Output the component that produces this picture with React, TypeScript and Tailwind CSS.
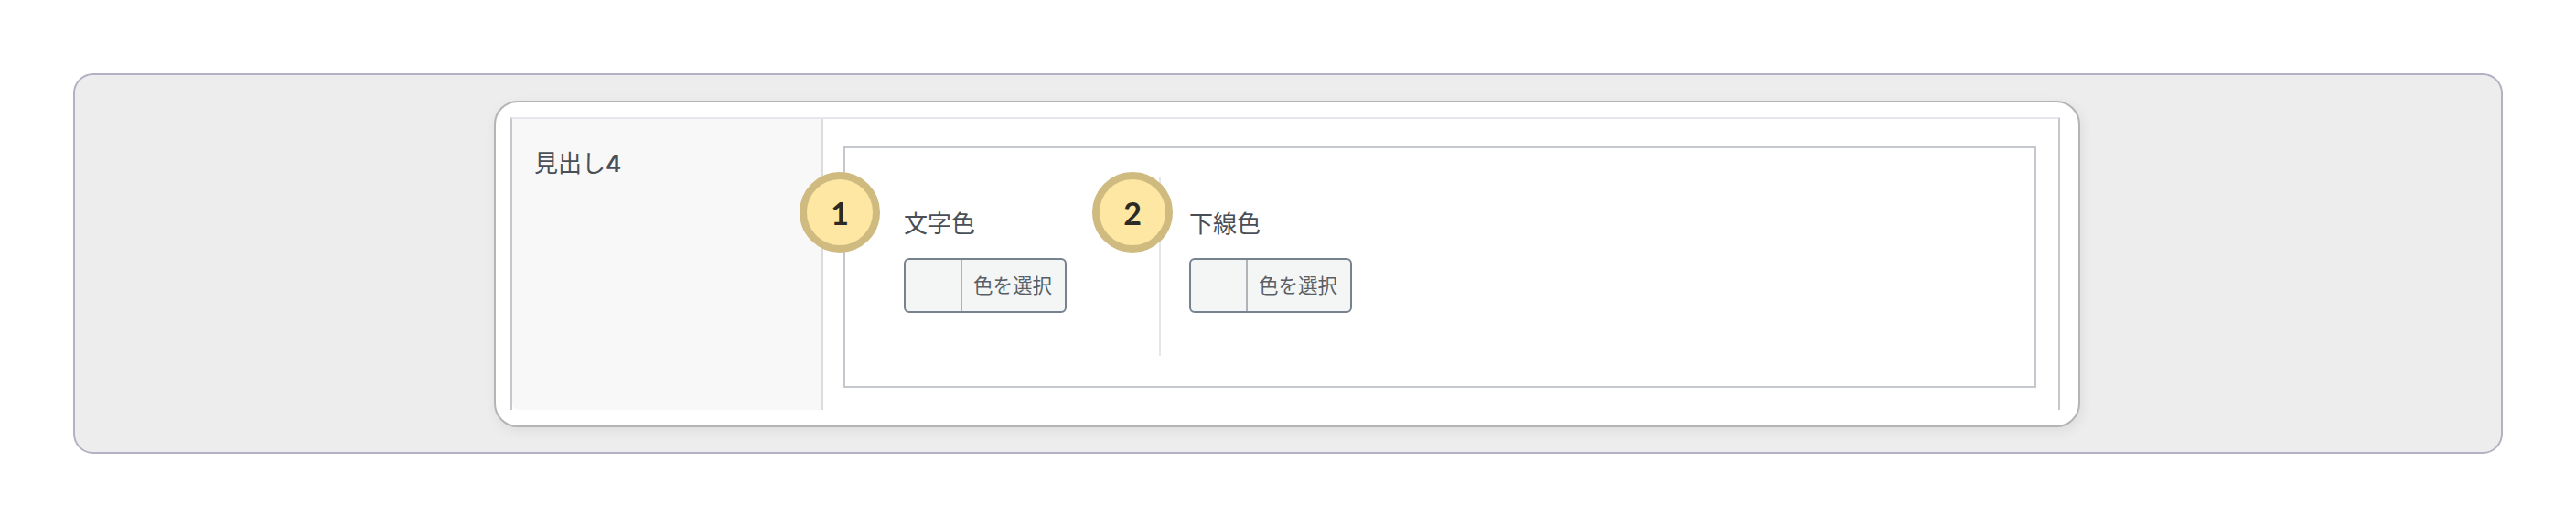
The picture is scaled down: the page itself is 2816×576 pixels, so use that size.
const jp = "font-['Lato','Noto_Sans_CJK_JP',sans-serif]";

function Badge({ n, className }: { n: number; className: string }) {
  return (
    <div
      className={`absolute flex h-[88px] w-[88px] items-center justify-center rounded-full border-[8px] border-[#cfba80] bg-[#fee7a3] text-[34px] font-bold text-[#2c2a25] ${className}`}
    >
      {n}
    </div>
  );
}

function ColorField({ label }: { label: string }) {
  return (
    <div>
      <div className="h-[36px] text-[26px] leading-[36px] text-[#4a4f57]">{label}</div>
      <div className="mt-[20px] flex h-[60px] w-[178px] overflow-hidden rounded-[6px] border-2 border-[#76828e] bg-[#f4f6f6]">
        <div className="w-[62px] border-r-2 border-[#b0b4b8]" />
        <div className="flex-1 pl-[12px] text-[21.5px] leading-[56px] text-[#5a5f66]">色を選択</div>
      </div>
    </div>
  );
}

export default function App() {
  return (
    <div className={`min-h-[576px] bg-white p-[80px] ${jp}`}>
      <div className="flex h-[416px] rounded-[22px] border-2 border-[#b4b1c4] bg-[#ededed] pl-[458px] pt-[28px]">
        <div className="h-[357px] w-[1734px] rounded-[26px] border-2 border-[#b4b4b4] bg-white pl-[16px] pr-[20px] pt-[16px] shadow-[2px_4px_14px_rgba(0,0,0,0.07)]">
          <div className="flex h-[320px] border-x-2 border-t-2 border-x-[#c4c8cc] border-t-[#e6e6ec]">
            {/* Label column */}
            <div className="h-full w-[340px] rounded-bl-[6px] border-r-2 border-[#dcdcdc] bg-[#f8f8f8] pl-[24px] pt-[30px]">
              <div className="text-[26px] leading-[36px] text-[#4a4f57]">
                見出し<span className="font-['Inter'] font-semibold">4</span>
              </div>
            </div>

            {/* Settings */}
            <div className="flex-1 pl-[22px] pr-[24px] pt-[30px]">
              <div className="flex h-[264px] border-2 border-[#c4c8cc] pl-[64px]">
                <div className="relative h-[228px] w-[279px] pt-[64px]">
                  <Badge n={1} className="left-[-114px] top-[26px]" />
                  <ColorField label="文字色" />
                </div>
                <div className="relative mt-[32px] h-[195px] border-l-2 border-[#e6e6e6] pl-[31px] pt-[32px]">
                  <Badge n={2} className="left-[-75px] top-[-6px]" />
                  <ColorField label="下線色" />
                </div>
              </div>
            </div>
          </div>
        </div>
      </div>
    </div>
  );
}
